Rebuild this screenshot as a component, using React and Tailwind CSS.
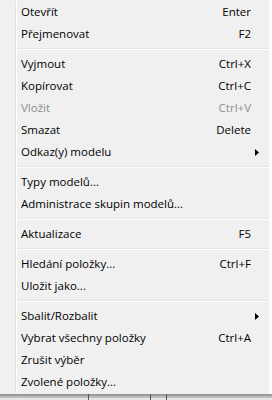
import React from 'react';

const groups = [
  [
    { label: 'Otevřít', key: 'Enter' },
    { label: 'Přejmenovat', key: 'F2' },
  ],
  [
    { label: 'Vyjmout', key: 'Ctrl+X' },
    { label: 'Kopírovat', key: 'Ctrl+C' },
    { label: 'Vložit', key: 'Ctrl+V', disabled: true },
    { label: 'Smazat', key: 'Delete' },
    { label: 'Odkaz(y) modelu', sub: true },
  ],
  [
    { label: 'Typy modelů...' },
    { label: 'Administrace skupin modelů...' },
  ],
  [{ label: 'Aktualizace', key: 'F5' }],
  [
    { label: 'Hledání položky...', key: 'Ctrl+F' },
    { label: 'Uložit jako...' },
  ],
  [
    { label: 'Sbalit/Rozbalit', sub: true },
    { label: 'Vybrat všechny položky', key: 'Ctrl+A' },
    { label: 'Zrušit výběr' },
    { label: 'Zvolené položky...' },
  ],
];

function Row({ item }) {
  return (
    <div
      className={
        'h-[22px] flex items-center ' +
        (item.disabled ? 'text-[#8d8d8d]' : 'text-black')
      }
    >
      <span className="flex-1 whitespace-nowrap">{item.label}</span>
      {item.key && <span className="whitespace-nowrap">{item.key}</span>}
      <span className="w-[18px] h-full flex items-center">
        {item.sub && (
          <svg width="4" height="7" viewBox="0 0 4 7" className="ml-[4px]">
            <path d="M0 0 L4 3.5 L0 7 Z" fill="#000" />
          </svg>
        )}
      </span>
    </div>
  );
}

export default function App() {
  return (
    <div
      className="w-[272px] h-[400px] bg-white overflow-hidden flex flex-col text-[11.5px] leading-[16px]"
      style={{ fontFamily: '"Open Sans", "Noto Sans", sans-serif' }}
    >
      <div className="w-[270px] bg-[#f0f0f0] border-r border-[#fbfbfb] flex pt-[1px] pb-[1px]">
        {/* gutter */}
        <div className="w-[16px] shrink-0 border-r border-[#e2e3e3]" />
        <div className="w-[1px] shrink-0 bg-white" />
        <div className="flex-1 pl-[4px]">
          {groups.map((g, i) => (
            <div key={i}>
              {i > 0 && (
                <div className="h-[8px] flex flex-col justify-center -ml-[4px]">
                  <div className="border-t border-[#e2e3e3]" />
                  <div className="border-t border-white" />
                </div>
              )}
              {g.map((item) => (
                <Row key={item.label} item={item} />
              ))}
            </div>
          ))}
        </div>
      </div>
      {/* shadow strip below menu */}
      <div className="relative flex-1">
        <div className="h-[2px] bg-[#9a9a9a]" />
        <div className="h-[2px] bg-[#bdbdbd]" />
        <div className="h-full bg-[#e6e6e6]" />
        <div className="absolute top-0 bottom-0 left-[88px] w-[1px] bg-[#555]" />
        <div className="absolute top-0 bottom-0 left-[150px] w-[1px] bg-[#555]" />
        <div className="absolute top-0 bottom-0 left-[166px] w-[1px] bg-[#555]" />
      </div>
    </div>
  );
}
